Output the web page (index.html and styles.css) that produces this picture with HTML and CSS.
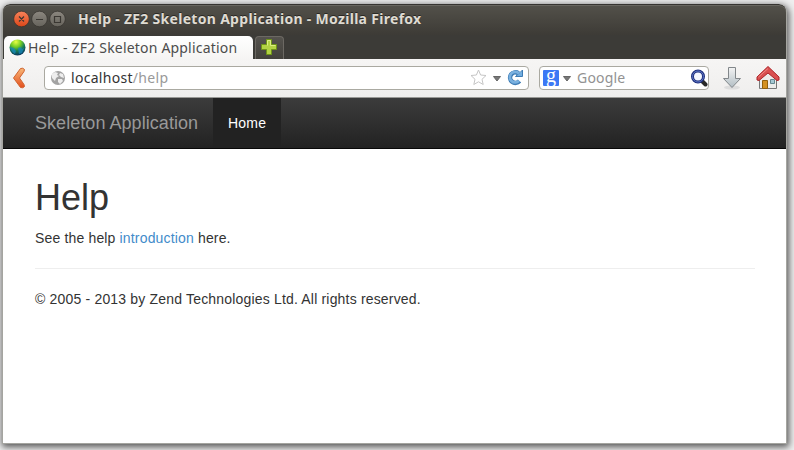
FILE: index.html
```html
<!DOCTYPE html>
<html lang="en">
<head>
<meta charset="utf-8">
<title>Help - ZF2 Skeleton Application</title>
<link rel="stylesheet" href="styles.css">
</head>
<body>
<div class="window">
  <header class="titlebar">
    <svg class="controls" width="54" height="18" viewBox="0 0 54 18">
      <defs>
        <linearGradient id="red" x2="0" y2="1"><stop stop-color="#f7835b"/><stop offset="1" stop-color="#dc4618"/></linearGradient>
        <linearGradient id="gray" x2="0" y2="1"><stop stop-color="#8b877f"/><stop offset="1" stop-color="#66635c"/></linearGradient>
      </defs>
      <circle cx="8.500" cy="9" r="7.800" fill="url(#red)" stroke="#33312d" stroke-width=".7"/>
      <circle cx="26.500" cy="9" r="7.800" fill="url(#gray)" stroke="#33312d" stroke-width=".7"/>
      <circle cx="44.500" cy="9" r="7.800" fill="url(#gray)" stroke="#33312d" stroke-width=".7"/>
      <path d="M6 6.500l5 5m0-5l-5 5M23 9.500h7M41.500 6.500h6v6h-6z" fill="none" stroke="#3a3732" stroke-width="1.200"/>
    </svg>
    <span class="window-title">Help - ZF2 Skeleton Application - Mozilla Firefox</span>
  </header>
  <div class="tabs">
    <div class="tab">
      <svg class="favicon" width="17" height="17" viewBox="0 0 17 17">
        <defs><radialGradient id="globe" cx=".4" cy=".15" r=".9"><stop stop-color="#eaff45"/><stop offset=".35" stop-color="#75cf25"/><stop offset=".62" stop-color="#197d55"/><stop offset="1" stop-color="#082c61"/></radialGradient></defs>
        <circle cx="8.500" cy="8.500" r="8" fill="url(#globe)"/>
        <path d="M1 8l4 1 2 3-1 3q-4-2-5-7M9 9l3-1 1 2 2-1-2 5-3 1z" fill="#1689c5" opacity=".7"/>
      </svg>
      <span class="tab-title">Help - ZF2 Skeleton Application</span>
    </div>
    <div class="new-tab">
      <svg width="16" height="16" viewBox="0 0 16 16"><path d="M5.500.500h5v5h5v5h-5v5h-5v-5h-5v-5h5z" fill="#b3d344" stroke="#6f9418"/><path d="M6.500 6.500v-5h3v5h5" fill="none" stroke="#dcef83"/></svg>
    </div>
  </div>
  <div class="toolbar">
    <svg class="back" width="14" height="22" viewBox="0 0 14 22"><defs><linearGradient id="arrow" x2="0" y2="1"><stop stop-color="#f8b778"/><stop offset="1" stop-color="#e34e1c"/></linearGradient></defs><path d="M8.500 1.500Q11 .500 12.500 2.500L12 4.500 7.500 11l4.500 6.500.500 2Q11 21.500 8.500 20.500L1.500 11z" fill="url(#arrow)" stroke="#cf632f"/></svg>
    <div class="address">
      <svg width="16" height="16" viewBox="0 0 16 16"><circle cx="8" cy="8" r="7" fill="#a3a3a3"/><path d="M2 4l3-2 3 1-1 2 2 1-3 2-1 3-3-3zM10 3l3 1 1 4-3-1-2-2zM8 9l4 0 1 2-3 3-2-2z" fill="#eee"/></svg>
      <span class="url">localhost<span>/help</span></span>
      <svg class="star" width="17" height="17" viewBox="0 0 17 17"><path d="M8.500 1l2.100 5 5.400.500-4 3.800 1.200 5.200-4.700-2.700-4.700 2.700L5 10.300 1 6.500 6.400 6z" fill="#fff" stroke="#c5c5c5"/></svg>
      <svg class="drop" width="9" height="6" viewBox="0 0 9 6"><path d="M.500.500h7L4 5z" fill="#777" stroke="#666"/></svg>
      <svg class="reload" width="17" height="17" viewBox="0 0 17 17"><path d="M12.500 12A5.300 5.300 0 1 1 11.500 4.300" fill="none" stroke="#3e7cb5" stroke-width="4.500"/><path d="M8.500 7.500h7V1L13 3.500z" fill="#72aee0" stroke="#3e7cb5"/><path d="M12 11.800A5.300 5.300 0 1 1 12 4.500" fill="none" stroke="#79b0df" stroke-width="2.700"/></svg>
    </div>
    <div class="search">
      <span class="google">g</span>
      <svg class="drop" width="9" height="6" viewBox="0 0 9 6"><path d="M.500.500h7L4 5z" fill="#777" stroke="#666"/></svg>
      <span class="placeholder">Google</span>
      <svg class="lens" width="18" height="18" viewBox="0 0 18 18"><path d="M11.500 11.500l4 4" stroke="#292929" stroke-width="4" stroke-linecap="round"/><circle cx="8" cy="7.500" r="5.500" fill="#f4f7ff" stroke="#20317e" stroke-width="3"/><circle cx="8" cy="7.500" r="5.500" fill="none" stroke="#5e76c6"/></svg>
    </div>
    <svg class="download" width="20" height="24" viewBox="0 0 20 24"><defs><linearGradient id="steel" x2="0" y2="1"><stop stop-color="#f3f3f3"/><stop offset="1" stop-color="#b2bec4"/></linearGradient></defs><ellipse cx="10" cy="21.500" rx="8" ry="2" fill="#ddd"/><path d="M6.500 1.500h7v11h5L10 21.500l-8.500-9h5z" fill="url(#steel)" stroke="#82878a"/></svg>
    <svg class="home" width="24" height="24" viewBox="0 0 24 24"><path d="M3.500 12L12 5l8.500 7v10.500h-17z" fill="#ededeb" stroke="#777"/><path d="M6.500 14.500h5v8h-5z" fill="#d49121" stroke="#92600c"/><path d="M14.500 13.500h4v4h-4z" fill="#a5c8d3" stroke="#668890"/><path d="M12 .500L1 11v3l2 .500L12 7l9 7.500 2-.500v-3z" fill="#d95050" stroke="#ad2529"/><path d="M12 2.500L2.500 11" stroke="#ef8985"/></svg>
  </div>
  <nav class="navbar"><a class="brand">Skeleton Application</a><a class="nav-item">Home</a></nav>
  <main class="content">
    <h1>Help</h1>
    <p>See the help <a>introduction</a> here.</p>
    <hr>
    <footer>© 2005 - 2013 by Zend Technologies Ltd. All rights reserved.</footer>
  </main>
</div>
</body>
</html>
```
FILE: styles.css
```css
* { box-sizing: border-box; }
body { margin: 0; padding: 4px 7px 6px 2px; height: 450px; overflow: hidden; background: #efefef; }
svg { display: block; flex: none; }
.window { width: 785px; height: 440px; border: 1px solid #a5a5a0; border-top: 0; border-radius: 8px 8px 0 0; background: #fff; box-shadow: 1px 2px 7px 1px #555; overflow: hidden; white-space: nowrap; }
.titlebar { height: 31px; margin: 0 -1px; padding-left: 10px; display: flex; align-items: center; background: linear-gradient(#53514a, #3d3b36); border: 1px solid #363430; border-width: 1px 1px 0; border-radius: 8px 8px 0 0; box-shadow: inset 0 1px #68665f; color: #dfdbd2; font: bold 14px "Noto Sans", sans-serif; }
.controls { margin-top: -3px; }
.window-title { margin-left: 11px; margin-top: -4px; letter-spacing: 0.3px; text-shadow: 0 -1px #292824; }
.tabs { height: 24px; margin: 0 -1px; padding: 0 0 0 2px; display: flex; background: #3c3b37; }
.tab { width: 249px; height: 24px; margin-top: 1px; padding-left: 5px; display: flex; align-items: center; background: linear-gradient(#fff, #f5f4f3); border-radius: 5px 5px 0 0; color: #4c4c4c; font: 14px "Noto Sans", sans-serif; }
.favicon { margin-top: -2px; }
.tab-title { margin: -2px 0 0 2px; letter-spacing: 0.19px; }
.new-tab { width: 29px; height: 23px; margin: 1px 0 0 2px; padding: 2px 0 0 5px; border: 1px solid #6c6963; border-bottom: 0; border-radius: 4px 4px 0 0; background: linear-gradient(#55534e, #43413c); }
.toolbar { height: 39px; padding: 0 6px 1px 9px; display: flex; align-items: center; background: linear-gradient(#f6f5f4, #efeeed); border-bottom: 1px solid #999996; font: 14px "Noto Sans", sans-serif; }
.address, .search { height: 24px; display: flex; align-items: center; border: 1px solid #aaa9a1; border-radius: 4px; background: #fff; }
.address { width: 485px; margin-left: 18px; padding: 0 4px 0 5px; }
.url { margin-left: 5px; color: #333; letter-spacing: 0.3px; }
.url span { color: #999; }
.star { margin-left: auto; }
.address .drop { margin: 3px 5px 0 6px; }
.search { width: 170px; margin-left: 10px; padding: 0 0 0 3px; }
.google { width: 16px; height: 16px; border-radius: 1px; background: #3c78f5; color: #fff; font: 20px/11px "Liberation Serif", serif; text-align: center; }
.search .drop { margin: 2px 5px 0 4px; }
.placeholder { color: #929292; letter-spacing: 0.2px; }
.lens { margin-left: auto; }
.download { margin-left: 13px; }
.home { margin-left: 14px; }
.navbar { height: 51px; padding-left: 17px; display: flex; border-bottom: 1px solid #080808; background: linear-gradient(#3c3c3c, #222); font: 14px/20px "Liberation Sans", sans-serif; }
.brand { padding: 15px; width: 193px; color: #999; font-size: 18px; letter-spacing: 0.05px; }
.nav-item { width: 68px; padding: 15px; background: #222; color: #fff; letter-spacing: 0.2px; }
.content { padding: 29px 31px 0 32px; color: #333; font: 14px/20px "Liberation Sans", sans-serif; letter-spacing: 0.18px; }
h1 { margin: 0 0 10px; font-size: 36px; line-height: 40px; font-weight: 400; letter-spacing: 0; }
p { margin: 0; letter-spacing: 0.16px; }
.content a { color: #428bca; }
hr { margin: 20px 0; border: 0; border-top: 1px solid #eee; }
```
